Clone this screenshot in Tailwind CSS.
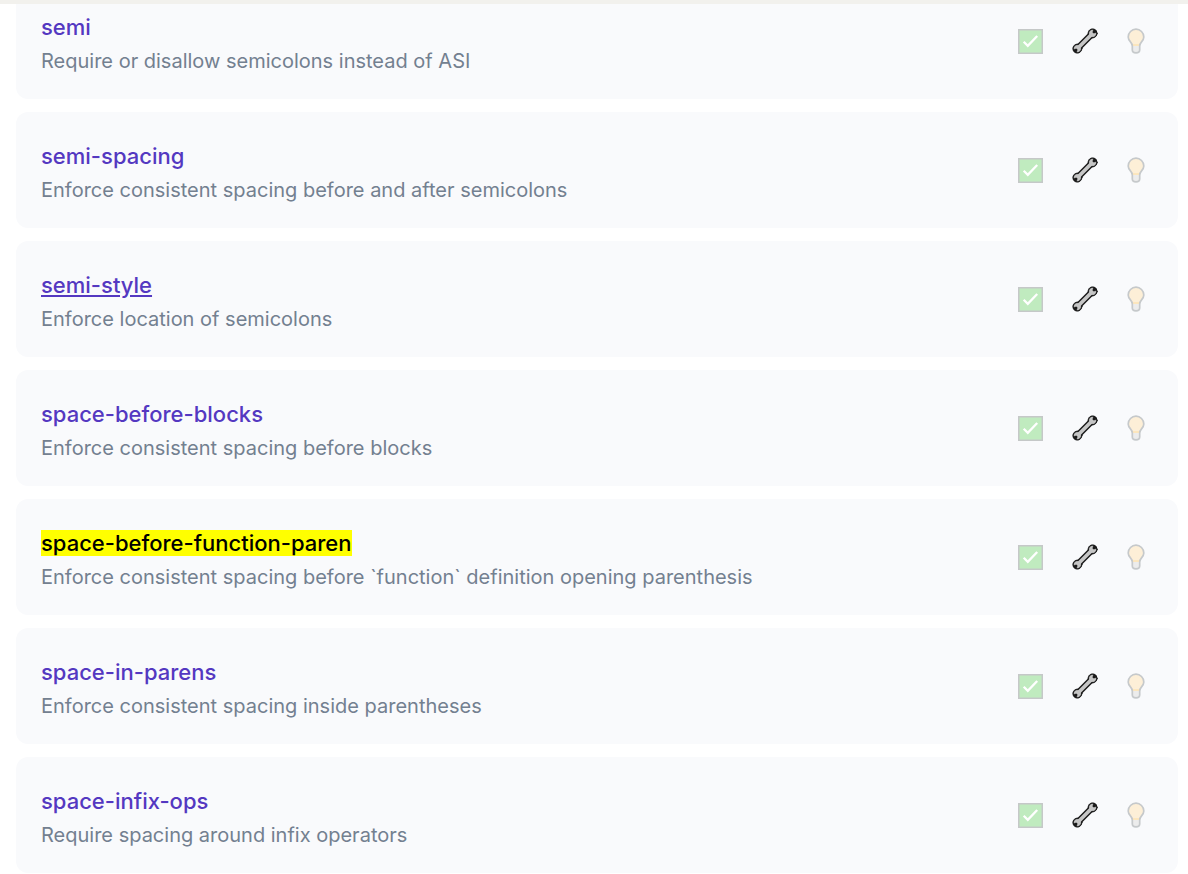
<!DOCTYPE html>
<html lang="en">
<head>
    <meta charset="UTF-8">
    <meta name="viewport" content="width=device-width, initial-scale=1.0">
    <title>Rules Reference</title>
    <script src="https://cdn.jsdelivr.net/npm/@tailwindcss/browser@4"></script>
</head>
<body class="bg-white font-['Inter',sans-serif] overflow-x-hidden">

    <!-- Icon set -->
    <svg class="hidden" aria-hidden="true">
        <symbol id="check" viewBox="0 0 25 25">
            <rect x="0.75" y="0.75" width="23.5" height="23.5" fill="#c0ebbf" stroke="#c5c8c8" stroke-width="1.5"/>
            <path d="M5.7 12.8l4.1 4L19.2 7" fill="none" stroke="#fff" stroke-width="2.3"/>
        </symbol>
        <symbol id="wrench" viewBox="0 0 26 26">
            <g fill="#1a1a1a" stroke="#1a1a1a" stroke-linecap="round">
                <path d="M6.5 19.5L19.5 6.5" stroke-width="6.6"/>
                <circle cx="5.4" cy="20.6" r="4.5"/>
                <circle cx="20.6" cy="5.4" r="4.5"/>
            </g>
            <g fill="#c6c6c6" stroke="#c6c6c6">
                <path d="M6.5 19.5L19.5 6.5" stroke-width="3.8"/>
                <circle cx="5.4" cy="20.6" r="3.1"/>
                <circle cx="20.6" cy="5.4" r="3.1"/>
            </g>
            <path d="M1 21.8L4.2 20.4L5.6 21.8L4.2 25L2 24ZM25 4.2L21.8 5.6L20.4 4.2L21.8 1L24 2Z" fill="#1a1a1a"/>
        </symbol>
        <symbol id="bulb" viewBox="0 0 18 26">
            <path d="M5.3 17V22Q5.3 24.8 9 24.8T12.7 22V17Z" fill="#ececec"/>
            <path d="M9 1.2A7.8 7.8 0 0 0 1.2 9C1.2 13.2 5.3 14 5.3 18H12.7C12.7 14 16.8 13.2 16.8 9A7.8 7.8 0 0 0 9 1.2Z" fill="#fdefd7"/>
            <path d="M6 16H12V18H6Z" fill="#fce6bd"/>
            <path d="M9 1.2A7.8 7.8 0 0 0 1.2 9C1.2 13.2 5.3 14 5.3 18V22Q5.3 24.8 9 24.8T12.7 22V18C12.7 14 16.8 13.2 16.8 9A7.8 7.8 0 0 0 9 1.2Z" fill="none" stroke="#c6c9cb" stroke-width="1.7"/>
        </symbol>
    </svg>

    <!-- Bottom edge of the sticky header -->
    <header class="fixed inset-x-0 top-0 h-1 bg-[#f2f1ed]"></header>

    <!-- Rule list -->
    <main class="-mt-[17px] flex flex-col gap-[13px] pl-4 pr-[10px]">
        <article class="flex items-center justify-between rounded-xl bg-[#f9fafc] py-6 pl-[25px] pr-[33px]">
            <div class="pt-1">
                <h2 class="text-[22px] leading-8 font-medium text-[#5438c1]"><a href="#semi">semi</a></h2>
                <p class="mt-1 text-[20px] leading-7 text-[#738090]">Require or disallow semicolons instead of ASI</p>
            </div>
            <div class="flex items-center gap-[29px]">
                <svg class="w-[25px] h-[25px]" role="img" aria-label="Recommended"><use href="#check"/></svg>
                <svg class="w-[26px] h-[26px]" role="img" aria-label="Fixable"><use href="#wrench"/></svg>
                <svg class="w-[18px] h-[26px]" role="img" aria-label="Has suggestions"><use href="#bulb"/></svg>
            </div>
        </article>

        <article class="flex items-center justify-between rounded-xl bg-[#f9fafc] py-6 pl-[25px] pr-[33px]">
            <div class="pt-1">
                <h2 class="text-[22px] leading-8 font-medium text-[#5438c1]"><a href="#semi-spacing">semi-spacing</a></h2>
                <p class="mt-1 text-[20px] leading-7 text-[#738090]">Enforce consistent spacing before and after semicolons</p>
            </div>
            <div class="flex items-center gap-[29px]">
                <svg class="w-[25px] h-[25px]" role="img" aria-label="Recommended"><use href="#check"/></svg>
                <svg class="w-[26px] h-[26px]" role="img" aria-label="Fixable"><use href="#wrench"/></svg>
                <svg class="w-[18px] h-[26px]" role="img" aria-label="Has suggestions"><use href="#bulb"/></svg>
            </div>
        </article>

        <article class="flex items-center justify-between rounded-xl bg-[#f9fafc] py-6 pl-[25px] pr-[33px]">
            <div class="pt-1">
                <h2 class="text-[22px] leading-8 font-medium text-[#5438c1]"><a href="#semi-style" class="underline">semi-style</a></h2>
                <p class="mt-1 text-[20px] leading-7 text-[#738090]">Enforce location of semicolons</p>
            </div>
            <div class="flex items-center gap-[29px]">
                <svg class="w-[25px] h-[25px]" role="img" aria-label="Recommended"><use href="#check"/></svg>
                <svg class="w-[26px] h-[26px]" role="img" aria-label="Fixable"><use href="#wrench"/></svg>
                <svg class="w-[18px] h-[26px]" role="img" aria-label="Has suggestions"><use href="#bulb"/></svg>
            </div>
        </article>

        <article class="flex items-center justify-between rounded-xl bg-[#f9fafc] py-6 pl-[25px] pr-[33px]">
            <div class="pt-1">
                <h2 class="text-[22px] leading-8 font-medium text-[#5438c1]"><a href="#space-before-blocks">space-before-blocks</a></h2>
                <p class="mt-1 text-[20px] leading-7 text-[#738090]">Enforce consistent spacing before blocks</p>
            </div>
            <div class="flex items-center gap-[29px]">
                <svg class="w-[25px] h-[25px]" role="img" aria-label="Recommended"><use href="#check"/></svg>
                <svg class="w-[26px] h-[26px]" role="img" aria-label="Fixable"><use href="#wrench"/></svg>
                <svg class="w-[18px] h-[26px]" role="img" aria-label="Has suggestions"><use href="#bulb"/></svg>
            </div>
        </article>

        <article class="flex items-center justify-between rounded-xl bg-[#f9fafc] py-6 pl-[25px] pr-[33px]">
            <div class="pt-1">
                <h2 class="text-[22px] leading-8 font-medium text-[#5438c1]"><a href="#space-before-function-paren"><mark class="bg-[#ffff00] text-black">space-before-function-paren</mark></a></h2>
                <p class="mt-1 text-[20px] leading-7 text-[#738090]">Enforce consistent spacing before `function` definition opening parenthesis</p>
            </div>
            <div class="flex items-center gap-[29px]">
                <svg class="w-[25px] h-[25px]" role="img" aria-label="Recommended"><use href="#check"/></svg>
                <svg class="w-[26px] h-[26px]" role="img" aria-label="Fixable"><use href="#wrench"/></svg>
                <svg class="w-[18px] h-[26px]" role="img" aria-label="Has suggestions"><use href="#bulb"/></svg>
            </div>
        </article>

        <article class="flex items-center justify-between rounded-xl bg-[#f9fafc] py-6 pl-[25px] pr-[33px]">
            <div class="pt-1">
                <h2 class="text-[22px] leading-8 font-medium text-[#5438c1]"><a href="#space-in-parens">space-in-parens</a></h2>
                <p class="mt-1 text-[20px] leading-7 text-[#738090]">Enforce consistent spacing inside parentheses</p>
            </div>
            <div class="flex items-center gap-[29px]">
                <svg class="w-[25px] h-[25px]" role="img" aria-label="Recommended"><use href="#check"/></svg>
                <svg class="w-[26px] h-[26px]" role="img" aria-label="Fixable"><use href="#wrench"/></svg>
                <svg class="w-[18px] h-[26px]" role="img" aria-label="Has suggestions"><use href="#bulb"/></svg>
            </div>
        </article>

        <article class="flex items-center justify-between rounded-xl bg-[#f9fafc] py-6 pl-[25px] pr-[33px]">
            <div class="pt-1">
                <h2 class="text-[22px] leading-8 font-medium text-[#5438c1]"><a href="#space-infix-ops">space-infix-ops</a></h2>
                <p class="mt-1 text-[20px] leading-7 text-[#738090]">Require spacing around infix operators</p>
            </div>
            <div class="flex items-center gap-[29px]">
                <svg class="w-[25px] h-[25px]" role="img" aria-label="Recommended"><use href="#check"/></svg>
                <svg class="w-[26px] h-[26px]" role="img" aria-label="Fixable"><use href="#wrench"/></svg>
                <svg class="w-[18px] h-[26px]" role="img" aria-label="Has suggestions"><use href="#bulb"/></svg>
            </div>
        </article>
    </main>

</body>
</html>
